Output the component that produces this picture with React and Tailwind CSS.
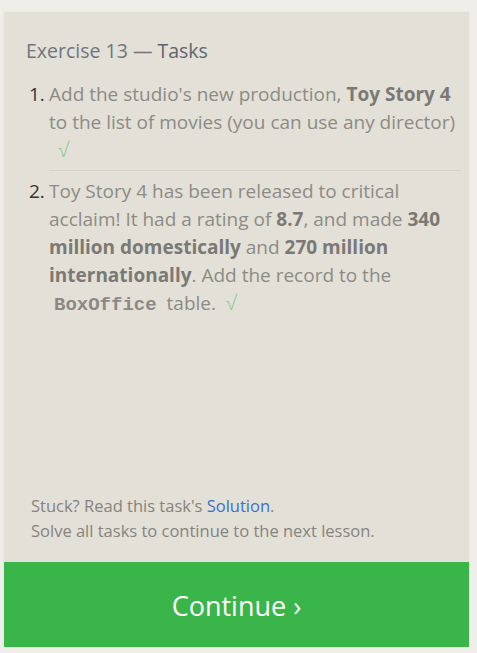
import React from 'react';

const body = { fontFamily: '"Open Sans", "Noto Sans", sans-serif' };

function Check() {
  return <span className="text-[#7cc889] font-light text-[20px]">√</span>;
}

export default function App() {
  return (
    <div className="min-h-screen w-[477px] h-[653px] bg-[#f0eee8] pt-[12px] pl-[4px]" style={body}>
      <div className="w-[465px] h-[635px] bg-[#e2e0d7] flex flex-col shadow-[0_0_2px_rgba(0,0,0,0.06)]">
        <div className="flex-1 pl-[22px] pr-[8px] pt-[26px]">
          <h2 className="text-[19.5px] leading-[26px] text-[#6f7680] font-normal">
            Exercise 13 — <span className="text-[#5d6570]">Tasks</span>
          </h2>
          <ol className="mt-[16px] text-[19px] leading-[28px] text-[#8c8b86]">
            <li className="flex pb-[6px]">
              <span className="w-[23px] shrink-0 pl-[3px] text-[#333]">1.</span>
              <div className="flex-1 border-b border-[#d3d1c8] pb-[6px]">
                Add the studio's new production, <b className="text-[#7a7975]">Toy Story 4</b> to the list of movies (you can use any director)
                <div className="pl-[9px]"><Check /></div>
              </div>
            </li>
            <li className="flex">
              <span className="w-[23px] shrink-0 pl-[3px] text-[#333]">2.</span>
              <div className="flex-1">
                Toy Story 4 has been released to critical acclaim! It had a rating of <b className="text-[#7a7975]">8.7</b>, and made <b className="text-[#7a7975]">340 million domestically</b> and <b className="text-[#7a7975]">270 million internationally</b>. Add the record to the{' '}
                <code className="px-[5px] font-bold text-[#8a8985] text-[19px]" style={{ fontFamily: '"Liberation Mono", monospace' }}>BoxOffice</code> table.&nbsp;&nbsp;<Check />
              </div>
            </li>
          </ol>
        </div>
        <div className="pl-[27px] pb-[19px] text-[16.5px] leading-[25px] text-[#85847f]">
          <p>Stuck? Read this task's <a className="text-[#3d6fcc]">Solution</a>.</p>
          <p>Solve all tasks to continue to the next lesson.</p>
        </div>
        <button className="h-[85px] w-full bg-[#39b54a] text-white text-[27px] pt-[3px] flex items-center justify-center">
          Continue ›
        </button>
      </div>
    </div>
  );
}
